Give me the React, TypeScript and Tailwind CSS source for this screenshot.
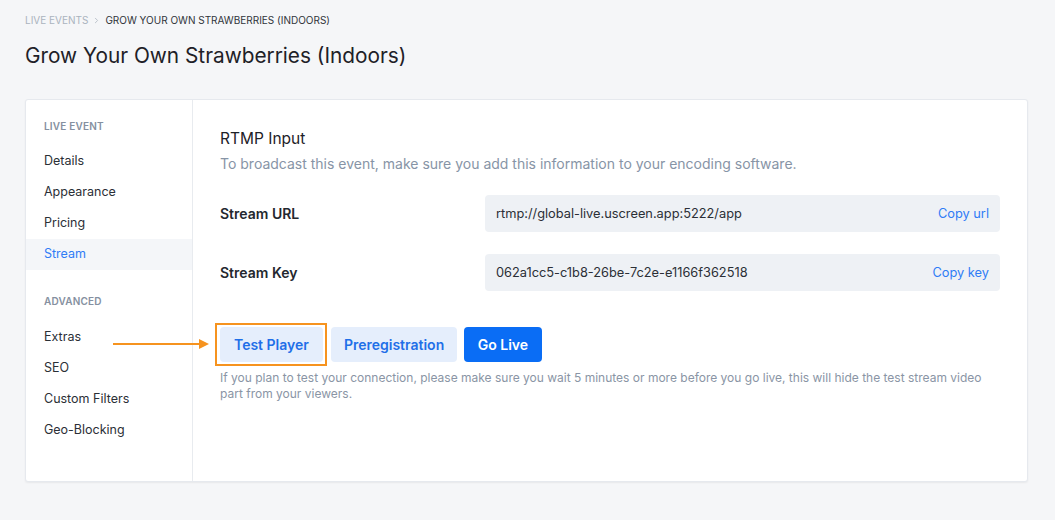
import { ChevronRight } from 'lucide-react';

const liveEventNav = ['Details', 'Appearance', 'Pricing', 'Stream'];
const advancedNav = ['Extras', 'SEO', 'Custom Filters', 'Geo-Blocking'];

function NavItem({ label, active }: { label: string; active?: boolean }) {
  return (
    <div
      className={
        active
          ? 'h-[31px] flex items-center pl-[18px] text-[12.5px] bg-[#f4f6f9] text-[#2f7cf6]'
          : 'h-[31px] flex items-center pl-[18px] text-[12.5px] text-[#2b2f36]'
      }
    >
      {label}
    </div>
  );
}

function Field({ label, value, action }: { label: string; value: string; action: string }) {
  return (
    <div className="flex items-center">
      <div className="w-[265px] text-[14px] font-semibold text-[#23272e]">{label}</div>
      <div className="flex-1 h-[37px] rounded-[4px] bg-[#eef1f5] flex items-center justify-between px-[11px] text-[12.8px]">
        <span className="text-[#2b2f36]">{value}</span>
        <span className="text-[#2f7cf6]">{action}</span>
      </div>
    </div>
  );
}

export default function App() {
  return (
    <div
      className="min-h-[520px] w-[1055px] bg-[#f5f6f8] pl-[25px] pr-[27px] pt-[13px]"
      style={{ fontFamily: 'Inter, "Noto Sans", sans-serif' }}
    >
      <div className="flex items-center gap-[4px] text-[10px] uppercase h-[14px]">
        <span className="text-[#aab3be]">Live Events</span>
        <ChevronRight className="w-[9px] h-[9px] text-[#b8bfc8]" strokeWidth={2.5} />
        <span className="text-[#30343a]">Grow Your Own Strawberries (Indoors)</span>
      </div>
      <h1 className="mt-[16px] text-[20.8px] leading-[26px] text-[#1e2127]">Grow Your Own Strawberries (Indoors)</h1>

      <div className="mt-[30px] h-[383px] flex bg-white border border-[#e6e9ee] rounded-[3px] shadow-[0_1px_2px_rgba(0,0,0,0.06)]">
        <div className="w-[167px] border-r border-[#e8ebef] pt-[19px]">
          <div className="pl-[18px] h-[14px] text-[10px] font-semibold uppercase tracking-[0.02em] text-[#8590a0]">
            Live Event
          </div>
          <div className="mt-[13px]">
            {liveEventNav.map((item) => (
              <NavItem key={item} label={item} active={item === 'Stream'} />
            ))}
          </div>
          <div className="mt-[24px] pl-[18px] h-[14px] text-[10px] font-semibold uppercase tracking-[0.02em] text-[#8590a0]">
            Advanced
          </div>
          <div className="mt-[14px]">
            {advancedNav.map((item) => (
              <NavItem key={item} label={item} />
            ))}
          </div>
        </div>

        <div className="flex-1 pl-[27px] pr-[27px] pt-[29px] relative">
          <div className="text-[15.5px] leading-[20px] text-[#1e2127]">RTMP Input</div>
          <div className="mt-[4px] text-[14px] text-[#8794a6]">
            To broadcast this event, make sure you add this information to your encoding software.
          </div>

          <div className="mt-[21px] flex flex-col gap-[22px]">
            <Field label="Stream URL" value="rtmp://global-live.uscreen.app:5222/app" action="Copy url" />
            <Field label="Stream Key" value="062a1cc5-c1b8-26be-7c2e-e1166f362518" action="Copy key" />
          </div>

          <div className="mt-[32px] flex items-center">
            <div className="-ml-[5px] pt-[2px] pb-[2px] pl-[3px] pr-[2px] border-2 border-[#f6931f]">
              <button className="h-[35px] px-[14px] rounded-[4px] bg-[#e5eefc] text-[14px] font-semibold text-[#1f6fe8]">
                Test Player
              </button>
            </div>
            <button className="ml-[4px] h-[35px] px-[13px] rounded-[4px] bg-[#e5eefc] text-[14px] font-semibold text-[#1f6fe8]">
              Preregistration
            </button>
            <button className="ml-[7px] h-[35px] px-[13.5px] rounded-[4px] bg-[#0a6df5] text-[14px] font-semibold text-white">
              Go Live
            </button>
          </div>
          <p className="mt-[4px] text-[12px] leading-[16px] text-[#8a95a5] pr-[5px]">
            If you plan to test your connection, please make sure you wait 5 minutes or more before you go live, this will hide the test stream video part from your viewers.
          </p>

          <svg
            className="absolute left-[-80px] top-[238px]"
            width="98"
            height="12"
            viewBox="0 0 98 12"
          >
            <line x1="0" y1="6" x2="88" y2="6" stroke="#f6931f" strokeWidth="2" />
            <path d="M86 1 L96 6 L86 11 Z" fill="#f6931f" />
          </svg>
        </div>
      </div>
    </div>
  );
}
